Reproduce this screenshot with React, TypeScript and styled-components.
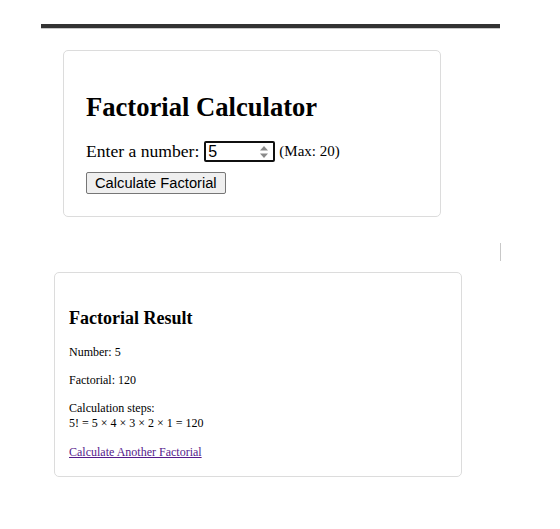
import React from "react";
import styled, { createGlobalStyle } from "styled-components";

const Global = createGlobalStyle`
  html, body { margin: 0; padding: 0; background: #fff; }
  body { font-family: "Liberation Serif", "Times New Roman", serif; color: #000; }
`;

const Page = styled.div`
  display: flex;
  flex-direction: column;
  align-items: flex-start;
  padding-top: 24px;
`;

const TopBar = styled.div`
  margin-left: 41px;
  width: 459px;
  height: 4px;
  background: #333;
  border-bottom: 1px solid #c8c8c8;
`;

const Card = styled.div<{ $left: number; $top: number; $width: number; $height: number; $pad: number }>`
  box-sizing: border-box;
  margin-left: ${(p) => p.$left}px;
  margin-top: ${(p) => p.$top}px;
  width: ${(p) => p.$width}px;
  height: ${(p) => p.$height}px;
  border: 1px solid #dcdcdc;
  border-radius: 5px;
  padding: 0 ${(p) => p.$pad}px;
  display: flex;
  flex-direction: column;
  align-items: flex-start;
`;

const SideMark = styled.div`
  margin-left: 500px;
  margin-top: 26px;
  width: 1px;
  height: 18px;
  background: #c8c8c8;
`;

const Title = styled.h1`
  font-size: 26.6px;
  font-weight: bold;
  margin: 41px 0 0;
  line-height: 30px;
`;

const Row = styled.div`
  display: flex;
  align-items: center;
  margin-top: 19px;
  font-size: 17.6px;
`;

const Label = styled.span`
  margin-right: 5px;
`;

const NumberBox = styled.div`
  box-sizing: border-box;
  width: 71px;
  height: 21px;
  border: 2px solid #101010;
  border-radius: 2px;
  display: flex;
  align-items: center;
  justify-content: space-between;
  padding: 0 4px 0 2px;
  font-family: "Liberation Sans", Arial, sans-serif;
  font-size: 16px;
`;

const Spinner = styled.svg`
  width: 10px;
  height: 14px;
`;

const Hint = styled.span`
  margin-left: 4px;
  font-size: 15px;
`;

const Button = styled.button`
  margin-top: 10px;
  box-sizing: border-box;
  height: 22px;
  padding: 0 8px;
  font-family: "Liberation Sans", Arial, sans-serif;
  font-size: 14.7px;
  color: #000;
  background: #efefef;
  border: 1px solid #767676;
  border-radius: 2px;
`;

const SubTitle = styled.h2`
  font-size: 18px;
  font-weight: bold;
  margin: 35px 0 0;
  line-height: 21px;
`;

const Para = styled.p`
  font-size: 12px;
  line-height: 15px;
  margin: 13px 0 0;
  &:first-of-type {
    margin-top: 16px;
  }
`;

const Link = styled.a`
  font-size: 12px;
  line-height: 15px;
  margin-top: 14px;
  color: #551a8b;
  text-decoration: underline;
`;

export default function App() {
  return (
    <>
      <Global />
      <Page>
        <TopBar />
        <Card $left={63} $top={21} $width={378} $height={167} $pad={22}>
          <Title>Factorial Calculator</Title>
          <Row>
            <Label>Enter a number:</Label>
            <NumberBox>
              <span>5</span>
              <Spinner viewBox="0 0 10 14">
                <path d="M5 1 L9 5.5 H1 Z" fill="#8a8a8a" />
                <path d="M5 13 L9 8.5 H1 Z" fill="#8a8a8a" />
              </Spinner>
            </NumberBox>
            <Hint>(Max: 20)</Hint>
          </Row>
          <Button>Calculate Factorial</Button>
        </Card>
        <SideMark />
        <Card $left={54} $top={11} $width={408} $height={205} $pad={14}>
          <SubTitle>Factorial Result</SubTitle>
          <Para>Number: 5</Para>
          <Para>Factorial: 120</Para>
          <Para>
            Calculation steps:
            <br />
            5! = 5 × 4 × 3 × 2 × 1 = 120
          </Para>
          <Link href="#">Calculate Another Factorial</Link>
        </Card>
      </Page>
    </>
  );
}
